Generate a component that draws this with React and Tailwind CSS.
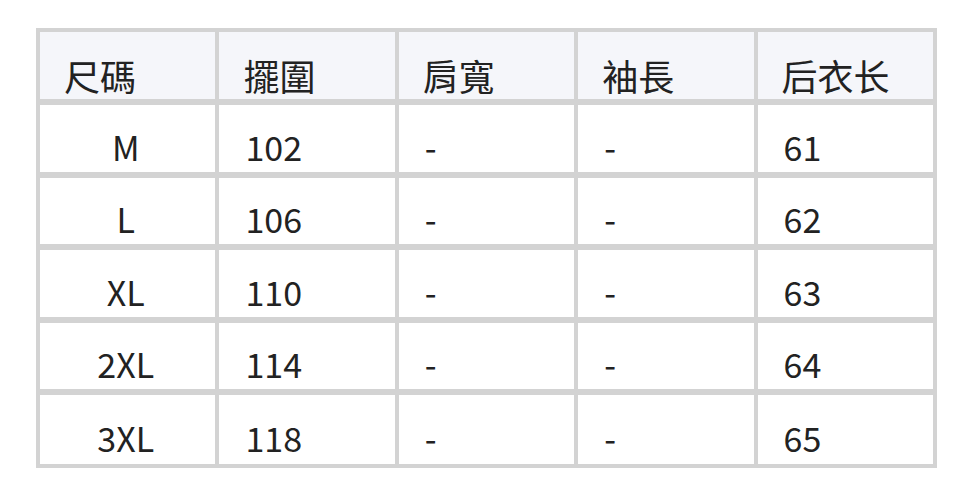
const headers = ['尺碼', '擺圍', '肩寬', '袖長', '后衣长'];

const rows = [
  ['M', '102', '-', '-', '61'],
  ['L', '106', '-', '-', '62'],
  ['XL', '110', '-', '-', '63'],
  ['2XL', '114', '-', '-', '64'],
  ['3XL', '118', '-', '-', '65'],
];

export default function App() {
  return (
    <div
      className="w-[972px] h-[495px] bg-white pt-[28px] pl-[36px] text-[#222] text-[34px] leading-none"
      style={{ fontFamily: '"Noto Sans CJK TC", "Noto Sans", sans-serif' }}
    >
      <div className="w-[901px] grid grid-cols-5 gap-x-[4px] gap-y-[6px] p-[4px] bg-[#d3d3d3]">
        {headers.map((h) => (
          <div key={h} className="h-[67px] bg-[#f5f6fa] flex items-center pl-[24px] pt-[19px] text-[36px]">
            {h}
          </div>
        ))}
        {rows.map((r, i) =>
          r.map((c, j) => (
            <div
              key={i + '-' + j}
              className={
                (i === rows.length - 1 ? 'h-[69px] ' : i % 2 ? 'h-[66px] ' : 'h-[67px] ') +
                'bg-white flex items-center pt-[16px] ' +
                (j === 0 ? 'justify-center pr-[4px]' : 'pl-[26px]')
              }
            >
              {c}
            </div>
          ))
        )}
      </div>
    </div>
  );
}
